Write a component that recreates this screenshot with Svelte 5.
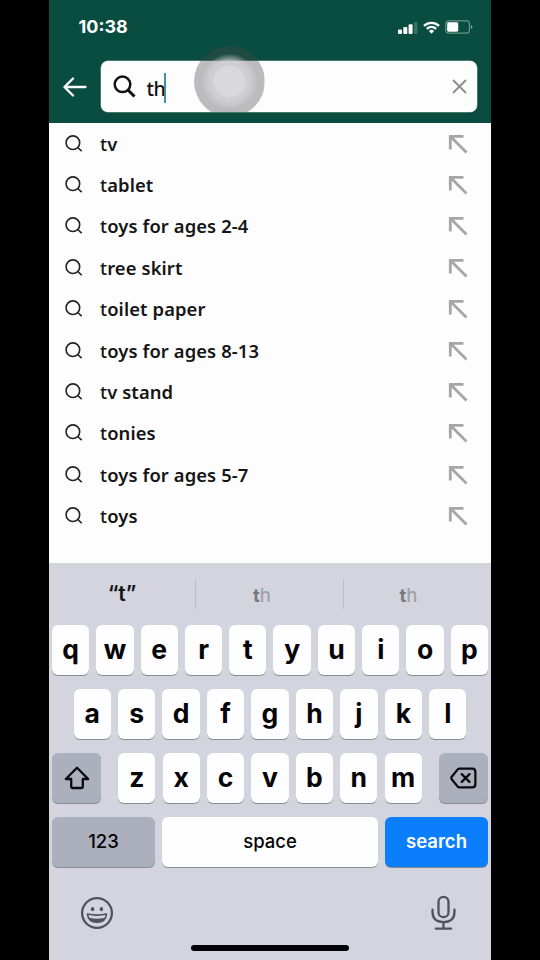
<script lang="ts">
    const suggestions = [
        'tv',
        'tablet',
        'toys for ages 2-4',
        'tree skirt',
        'toilet paper',
        'toys for ages 8-13',
        'tv stand',
        'tonies',
        'toys for ages 5-7',
        'toys',
    ]

    const topRow = [...'qwertyuiop']
    const homeRow = [...'asdfghjkl']
    const bottomRow = [...'zxcvbnm']

    let query = $state('th')
</script>

<main class="phone">
    <header>
        <div class="status">
            <span class="time">10:38</span>
            <div class="indicators">
                <svg class="signal" width="20" height="13" viewBox="0 0 20 13" fill="#fff">
                    <rect x="0" y="8.5" width="4" height="4.5" rx="1" />
                    <rect x="5.3" y="6" width="4" height="7" rx="1" />
                    <rect x="10.6" y="3.3" width="4" height="9.7" rx="1" />
                    <rect x="15.9" y="1" width="3.6" height="12" rx="1" opacity="0.2" />
                </svg>
                <svg class="wifi" width="17" height="13" viewBox="0 0 18 13" fill="none" stroke="#fff" stroke-width="2.4">
                    <path d="M1 4.8a11.3 11.3 0 0 1 16 0M4.1 8a6.9 6.9 0 0 1 9.8 0" />
                    <path d="M6.3 10.2a3.8 3.8 0 0 1 5.4 0L9 13z" fill="#fff" stroke="none" />
                </svg>
                <svg width="28" height="14" viewBox="0 0 29 14">
                    <rect x="0.7" y="0.7" width="24.6" height="12.6" rx="3" fill="none" stroke="#fff" stroke-opacity="0.4" stroke-width="1.2" />
                    <rect x="2.2" y="2.2" width="11.5" height="9.6" rx="1.5" fill="#fff" />
                    <path d="M26.8 5v4q1.7-.7 1.7-2t-1.7-2z" fill="#fff" opacity="0.5" />
                </svg>
            </div>
        </div>
        <div class="search-row">
            <button class="back" aria-label="Back">
                <svg width="24" height="20" viewBox="0 0 24 20" fill="none" stroke="#fff" stroke-width="2.3" stroke-linecap="round" stroke-linejoin="round">
                    <path d="M22.5 10H1.5M10 1.5L1.5 10l8.5 8.5" />
                </svg>
            </button>
            <div class="field">
                <svg width="23" height="23" viewBox="0 0 23 23" fill="none" stroke="#111" stroke-width="2.5">
                    <circle cx="9.5" cy="9.3" r="7.8" />
                    <path d="M15 15l6.5 6.5" stroke-width="3" />
                </svg>
                <span class="query">{query}</span>
                <span class="caret"></span>
                <button class="clear" aria-label="Clear" onclick={() => (query = '')}>
                    <svg width="15" height="15" viewBox="0 0 15 15" fill="none" stroke="#8c8c8c" stroke-width="1.8">
                        <path d="M1 1l13 13M14 1L1 14" />
                    </svg>
                </button>
            </div>
        </div>
        <div class="touch"></div>
    </header>

    <ul class="suggestions">
        {#each suggestions as text}
            <li>
                <svg width="18" height="18" viewBox="0 0 18 18" fill="none" stroke="#222" stroke-width="1.6">
                    <circle cx="7.9" cy="7.7" r="6.8" />
                    <path d="M12.7 12.5l4 3.7" />
                </svg>
                <span class="label"><span class="typed">{text[0]}</span>{text.slice(1)}</span>
                <svg width="20" height="20" viewBox="0 0 20 20" fill="none" stroke="#a6a6a6" stroke-width="2.8">
                    <path d="M15.5 2.3H2.3V15.5M2.5 2.5l16 16" />
                </svg>
            </li>
        {/each}
    </ul>

    <section class="keyboard">
        <div class="predictions">
            <span class="literal">“t”</span>
            <span class="guess"><b>t</b>h</span>
            <span class="guess"><b>t</b>h</span>
        </div>
        <div class="row">
            {#each topRow as key}<button class="key">{key}</button>{/each}
        </div>
        <div class="row home">
            {#each homeRow as key}<button class="key">{key}</button>{/each}
        </div>
        <div class="row">
            <button class="key gray shift" aria-label="Shift">
                <svg width="26" height="24" viewBox="0 0 26 24" fill="none" stroke="#0a0a0c" stroke-width="2.3" stroke-linejoin="round">
                    <path d="M13 1.8L1.8 13h5.4v7.8q0 1.2 1.2 1.2h9.2q1.2 0 1.2-1.2V13h5.4z" />
                </svg>
            </button>
            {#each bottomRow as key}<button class="key">{key}</button>{/each}
            <button class="key gray delete" aria-label="Delete">
                <svg width="27" height="22" viewBox="0 0 28 22" fill="none" stroke="#0a0a0c" stroke-width="2.3" stroke-linejoin="round" stroke-linecap="round">
                    <path d="M10 1.3h13q3.3 0 3.3 3.3v12.8q0 3.3-3.3 3.3H10q-1.3 0-2.2-1L2 12.5q-1.3-1.5 0-3l5.8-7.2q.9-1 2.2-1zM12.2 7l8 8M20.2 7l-8 8" />
                </svg>
            </button>
        </div>
        <div class="row">
            <button class="key gray wide">123</button>
            <button class="key space">space</button>
            <button class="key wide search">search</button>
        </div>
        <div class="tools">
            <svg width="34" height="34" viewBox="0 0 34 34" fill="none" stroke="#50525c">
                <circle cx="17" cy="17" r="14.9" stroke-width="2.3" />
                <ellipse cx="12.6" cy="13.2" rx="1.7" ry="2.1" fill="#50525c" stroke="none" />
                <ellipse cx="21.4" cy="13.2" rx="1.7" ry="2.1" fill="#50525c" stroke="none" />
                <path d="M7.5 18q9.5 2.2 19 0-.7 8.3-9.5 8.3T7.5 18z" stroke-width="1.6" stroke-linejoin="round" />
                <path d="M8.8 21.7q8.2 2 16.4 0-2 4.600-8.2 4.600t-8.2-4.600z" fill="#50525c" stroke="none" />
            </svg>
            <svg width="25" height="36" viewBox="0 0 26 36" fill="none" stroke="#50525c" stroke-width="2.4" stroke-linecap="round">
                <rect x="7.8" y="1.3" width="10.4" height="21" rx="5.2" />
                <path d="M1.6 14.5v2.5q0 10.4 11.4 10.4T24.4 17v-2.5M13 27.4V34M5 34.2h16" />
            </svg>
        </div>
        <div class="home-bar"></div>
    </section>
</main>

<style>
    :global(body) {
        background: #000;
    }

    .phone {
        width: 442.5px;
        height: 960px;
        margin-left: 48.5px;
        display: flex;
        flex-direction: column;
        background: #fefdfe;
        font-family: Inter, 'Liberation Sans', sans-serif;
        overflow: hidden;
    }

    button {
        border: none;
        padding: 0;
        margin: 0;
        background: none;
        font-family: inherit;
        display: flex;
        align-items: center;
        justify-content: center;
    }

    svg {
        display: block;
        flex-shrink: 0;
    }

    header {
        position: relative;
        box-sizing: border-box;
        height: 123px;
        flex-shrink: 0;
        background: #084d3f;
    }

    .status {
        box-sizing: border-box;
        height: 61px;
        padding: 16px 18px 0 30px;
        display: flex;
        align-items: flex-start;
        justify-content: space-between;
    }

    .time {
        color: #fff;
        font-size: 18px;
        font-weight: 700;
        line-height: 22px;
    }

    .indicators {
        display: flex;
        align-items: center;
        gap: 5px;
        padding-top: 4px;
    }

    .search-row {
        display: flex;
        align-items: center;
        padding: 0 14px;
    }

    .back {
        width: 24px;
        margin-right: 14px;
        padding-top: 1px;
    }

    .field {
        flex: 1;
        box-sizing: border-box;
        height: 51px;
        padding: 0 10px 0 12px;
        display: flex;
        align-items: center;
        border-radius: 7px;
        background: #fefdfe;
        box-shadow: 0 0 0 0.5px #8ca69e;
    }

    .query {
        margin: 4px 0 0 11px;
        font-family: 'Noto Sans', sans-serif;
        font-size: 19.5px;
        font-weight: 500;
        letter-spacing: -0.5px;
        line-height: 28px;
        color: #111;
    }

    .caret {
        width: 2px;
        height: 30px;
        margin: 2px 0 0 -1px;
        background: #3d929d;
    }

    .clear {
        margin-left: auto;
    }

    .touch {
        position: absolute;
        left: 145px;
        top: 46px;
        width: 71px;
        height: 71px;
        border-radius: 50%;
        background: radial-gradient(
            circle,
            rgba(215, 214, 216, 0.95) 0 15px,
            rgba(200, 200, 203, 0.88) 17px 20px,
            rgba(160, 160, 163, 0.6) 24px,
            rgba(70, 70, 74, 0.36) 28px 35px
        );
        clip-path: inset(0 0 5px);
    }

    .suggestions {
        list-style: none;
        margin: 0;
        padding: 0;
        height: 440px;
        flex-shrink: 0;
    }

    li {
        height: 41.4px;
        padding: 0 23px 0 16px;
        display: flex;
        align-items: center;
    }

    .label {
        flex: 1;
        margin-left: 17.5px;
        padding-bottom: 1px;
        font-family: 'Noto Sans', sans-serif;
        font-size: 18.4px;
        font-weight: 650;
        letter-spacing: 0.1px;
        color: #151515;
    }

    .typed {
        font-weight: 500;
    }

    .keyboard {
        position: relative;
        flex: 1;
        padding: 0 3px 0 3.5px;
        background: #d3d4dd;
    }

    .predictions {
        height: 62px;
        display: grid;
        grid-template-columns: 143px 148px 1fr;
        align-items: center;
    }

    .predictions span {
        height: 30px;
        line-height: 32px;
        text-align: center;
        font-size: 20px;
    }

    .predictions .guess {
        border-left: 1px solid #bcbdc6;
        padding-right: 15px;
        font-size: 18.5px;
        font-weight: 500;
        color: #a0a1aa;
    }

    .guess b {
        color: #777982;
        font-weight: 700;
    }

    .predictions .literal {
        padding-right: 3px;
        line-height: 30px;
        font-size: 21px;
        font-weight: 600;
        color: #15151a;
    }

    .row {
        display: flex;
        justify-content: space-between;
        margin-bottom: 14px;
    }

    .home {
        padding: 0 21.5px;
    }

    .key {
        width: 37.3px;
        height: 50px;
        border-radius: 6px;
        padding-bottom: 3px;
        box-sizing: border-box;
        background: #fefdff;
        box-shadow: 0 1px 0.5px #898a8f;
        font-size: 26.5px;
        font-weight: 700;
        color: #050505;
    }

    .gray {
        background: #abb0bc;
    }

    .shift,
    .delete {
        width: 49px;
        padding: 0;
    }

    .shift {
        margin-right: 10px;
    }

    .delete {
        margin-left: 10px;
    }

    .wide {
        width: 103px;
        padding-bottom: 2px;
        font-size: 18.5px;
        font-weight: 500;
    }

    .space {
        width: 216px;
        font-size: 18.5px;
        font-weight: 550;
    }

    .search {
        background: #0b7ffb;
        padding-bottom: 3px;
        font-weight: 600;
        color: #fff;
    }

    .tools {
        display: flex;
        justify-content: space-between;
        align-items: center;
        padding: 14px 32px 0 28px;
    }

    .home-bar {
        position: absolute;
        left: 142.5px;
        bottom: 9.5px;
        width: 158px;
        height: 6px;
        border-radius: 3px;
        background: #030307;
    }
</style>
